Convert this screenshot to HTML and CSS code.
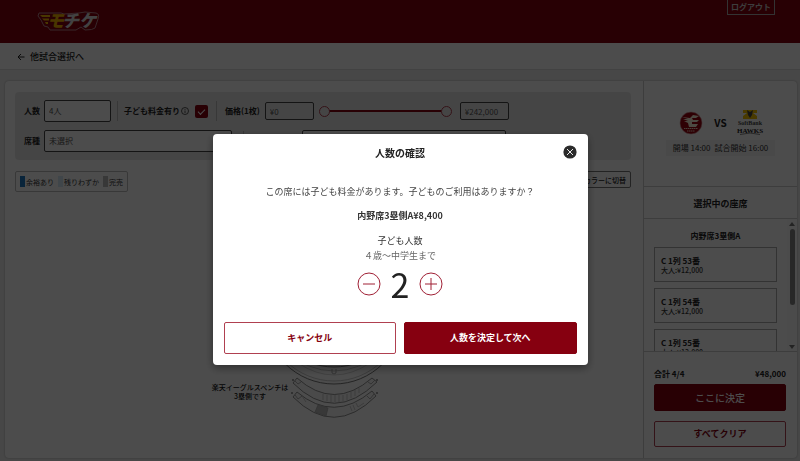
FILE: index.html
```html
<!DOCTYPE html>
<html lang="ja">
<head>
    <meta charset="UTF-8">
    <meta name="viewport" content="width=device-width, initial-scale=1.0">
    <title>座席選択</title>
    <link rel="stylesheet" href="styles.css">
</head>
<body>
    <header class="header">
        <svg class="logo" viewBox="0 0 64 20" role="img" aria-label="モチケ">
            <path d="M3 2H25L28 3L43 2L49 1L60 2Q64 3 62 8L59 17Q57 19 49 19L45 16L40 19H14L12 16L8 15L5 9L2 5Z" fill="#860010" stroke="#b9868c" stroke-width="1" stroke-linejoin="round"/>
            <path d="M4 4H14V6H6ZM6 7.500H13V9.500H8ZM9 11H12V13H10Z" fill="#f5b400"/>
            <text class="logo-text logo-gold" x="11" y="16">モ</text>
            <text class="logo-text" x="26" y="16">チケ</text>
        </svg>
        <button class="logout" type="button">ログアウト</button>
    </header>

    <nav class="subnav">
        <a class="back" href="#">
            <svg class="back-arrow" viewBox="0 0 8 8"><path d="M7.500 4H1M4 1L1 4L4 7"/></svg>
            他試合選択へ
        </a>
    </nav>

    <main class="content">
        <section class="seat-panel">
            <form class="filters">
                <div class="filter-row">
                    <label for="people">人数</label>
                    <select class="field people" id="people"><option>4人</option></select>
                    <span class="divider"></span>
                    <label for="child">子ども料金有り</label>
                    <svg class="info" viewBox="0 0 8 8"><circle cx="4" cy="4" r="3.500"/><path d="M4 3.500V6M4 2V2.800"/></svg>
                    <input class="check" type="checkbox" id="child" checked>
                    <span class="divider"></span>
                    <label class="price-label" for="price-min">価格(1枚)</label>
                    <input class="field price" type="text" id="price-min" value="¥0">
                    <div class="slider">
                        <input type="range" min="0" max="242000" value="0" aria-label="最低価格">
                        <input type="range" min="0" max="242000" value="242000" aria-label="最高価格">
                    </div>
                    <input class="field price" type="text" value="¥242,000" aria-label="上限">
                </div>
                <div class="filter-row">
                    <label for="seat-type">席種</label>
                    <select class="field seat-type" id="seat-type"><option>未選択</option></select>
                    <span class="divider"></span>
                    <label class="area-label" for="area">エリア</label>
                    <select class="field area" id="area"><option>未選択</option></select>
                </div>
            </form>

            <div class="map-tools">
                <ul class="legend">
                    <li><span class="swatch available"></span>余裕あり</li>
                    <li><span class="swatch few"></span>残りわずか</li>
                    <li><span class="swatch soldout"></span>完売</li>
                </ul>
                <button class="color-switch" type="button">座席カラーに切替</button>
            </div>

            <!-- Stadium map -->
            <svg class="map" viewBox="193 200 260 230">
                <g fill="none" stroke="#999" stroke-width="0.800">
                    <circle cx="334" cy="315" r="69" stroke="#555"/>
                    <circle cx="334" cy="313" r="68" stroke="#bbb"/>
                    <circle cx="334" cy="306" r="65" stroke="#bbb"/>
                    <circle cx="334" cy="300" r="67" stroke="#555"/>
                    <path d="M298 363Q334 387 370 363" stroke="#ccc"/>
                    <path d="M332 369V373Q334 375 336 373V369"/>
                    <path d="M297 378Q334 411 372 378L377 382Q334 424 293 383Z" fill="#f8f8f8" stroke="#777"/>
                    <path d="M295 381L298 384L301 382M375 380L371 384L368 382"/>
                    <path d="M323 394V400M327 395V401M331 395V402M335 395V402M339 395V402M343 395V401M347 394V400M351 392V398M355 390V396M359 388V393" stroke="#bbb"/>
                    <path d="M297 392Q334 423 372 391L376 396Q334 438 293 397Z" fill="#f8f8f8" stroke="#777"/>
                    <path d="M295 395L298 399L302 396M374 394L370 399L367 396" />
                    <path d="M302 396L306 402M350 406L352 411M353 405L355 410M356 403L358 407L364 403" stroke="#bbb"/>
                    <path d="M318 405L328 408L326 416L315 412Z" fill="#bbb" stroke="#aaa"/>
                </g>
                <g fill="#333">
                    <circle cx="293" cy="380" r="0.800"/><circle cx="377" cy="380" r="0.800"/>
                    <circle cx="292" cy="393" r="0.800"/><circle cx="377" cy="393" r="0.800"/>
                </g>
                <text class="map-text" x="250" y="390">楽天イーグルスベンチは</text>
                <text class="map-text" x="250" y="399">3塁側です</text>
            </svg>
        </section>

        <aside class="sidebar">
            <div class="match">
                <div class="teams">
                    <svg class="team" viewBox="0 0 24 26">
                        <circle cx="12" cy="13" r="11" fill="#9c0010" stroke="#d5a9a9" stroke-width="0.600"/>
                        <path d="M3 7L11 8L14 5L20 6L17 8H13L14 10H20L18 12H13V14H19L17 17H10L9 13L5 11L9 11L4 9L9 9Z" fill="#fff3dc"/>
                        <path d="M5 18.500H19M8 21H16" stroke="#ecd0bd" stroke-width="1.200" stroke-dasharray="1.500 0.500"/>
                    </svg>
                    <span class="vs">VS</span>
                    <svg class="team" viewBox="0 0 24 26">
                        <path d="M5 0H19V3H15L19 6V9H5V6L9 3H5Z" fill="#f5c400"/>
                        <path d="M9 0L12 2L15 0L14 5L12 8L10 5Z" fill="#444"/>
                        <text class="team-soft" x="12" y="15">SoftBank</text>
                        <text class="team-hawks" x="12" y="23">HAWKS</text>
                        <path d="M2 24.500Q12 21.500 22 24.500" fill="none" stroke="#666" stroke-width="0.800"/>
                    </svg>
                </div>
                <p class="times"><span>開場 14:00</span><span>試合開始 16:00</span></p>
            </div>
            <h2 class="selected-title">選択中の座席</h2>
            <div class="seat-list">
                <div class="seats">
                    <h3>内野席3塁側A</h3>
                    <div class="seat"><b>C 1列 53番</b><span>大人:¥12,000</span></div>
                    <div class="seat"><b>C 1列 54番</b><span>大人:¥12,000</span></div>
                    <div class="seat"><b>C 1列 55番</b><span>大人:¥12,000</span></div>
                </div>
                <div class="scrollbar">
                    <svg viewBox="0 0 6 4"><path d="M0 4L3 0L6 4Z"/></svg>
                    <span class="thumb"></span>
                    <svg viewBox="0 0 6 4"><path d="M0 0L3 4L6 0Z"/></svg>
                </div>
            </div>
            <div class="summary">
                <p class="total"><span>合計 4/4</span><span>¥48,000</span></p>
                <button class="btn btn-primary decide" type="button">ここに決定</button>
                <button class="btn btn-outline clear" type="button">すべてクリア</button>
            </div>
        </aside>
    </main>

    <div class="overlay">
        <div class="modal" role="dialog" aria-labelledby="modal-title">
            <h1 id="modal-title">人数の確認</h1>
            <button class="close" type="button" aria-label="閉じる">
                <svg viewBox="0 0 14 14"><circle cx="7" cy="7" r="6.600" fill="#2b2b2b"/><path d="M4 4L10 10M10 4L4 10" stroke="#fff" stroke-width="0.900"/></svg>
            </button>
            <p class="question">この席には子ども料金があります。子どものご利用はありますか？</p>
            <p class="seat-price">内野席3塁側A¥8,400</p>
            <p class="child-label">子ども人数</p>
            <p class="child-age">４歳〜中学生まで</p>
            <div class="counter">
                <button class="step" type="button" aria-label="減らす"><svg viewBox="0 0 24 24"><circle cx="12" cy="12" r="11"/><path d="M6 12H18"/></svg></button>
                <output class="count">2</output>
                <button class="step" type="button" aria-label="増やす"><svg viewBox="0 0 24 24"><circle cx="12" cy="12" r="11"/><path d="M6 12H18M12 6V18"/></svg></button>
            </div>
            <div class="modal-actions">
                <button class="btn btn-outline" type="button">キャンセル</button>
                <button class="btn btn-primary" type="button">人数を決定して次へ</button>
            </div>
        </div>
    </div>
</body>
</html>
```

FILE: styles.css
```css
* {
    box-sizing: border-box;
}
body {
    font-family: "Noto Sans CJK JP", sans-serif;
    font-size: 8px;
    line-height: 12px;
    color: #222;
    background-color: #eee;
    margin: 0;
    height: 100vh;
    display: flex;
    flex-direction: column;
    overflow: hidden;
}
h1, h2, h3, p, ul {
    margin: 0;
    padding: 0;
}
button, input, select {
    font-family: inherit;
    font-size: inherit;
    line-height: inherit;
    color: inherit;
    margin: 0;
}
svg {
    display: block;
}

/* Header */
.header {
    display: flex;
    justify-content: space-between;
    align-items: flex-start;
    height: 43px;
    flex-shrink: 0;
    padding: 0 25px 0 36px;
    background-color: #860010;
}
.logo {
    width: 64px;
    height: 20px;
    margin-top: 11px;
    overflow: visible;
}
.logo-text {
    font-size: 17px;
    font-weight: 900;
    font-style: italic;
    fill: #ddd;
}
.logo-gold {
    fill: #f5b400;
}
.logout {
    height: 15px;
    padding: 0 3px;
    border: 1px solid #aaa;
    border-top: 0;
    background-color: transparent;
    color: #ccc;
    font-weight: bold;
}
.subnav {
    flex-shrink: 0;
    height: 27px;
    padding: 8px 17px;
    background-color: #fff;
    border-bottom: 1px solid #ddd;
}
.back {
    display: flex;
    align-items: center;
    gap: 5px;
    color: #222;
    font-size: 9px;
    font-weight: 500;
    text-decoration: none;
}
.back-arrow {
    width: 8px;
    height: 8px;
    fill: none;
    stroke: #222;
}

/* Main card */
.content {
    flex: 1;
    min-height: 0;
    display: flex;
    margin: 11px 3px 3px 5px;
    background-color: #fff;
    border-radius: 4px;
    box-shadow: 0 0 2px rgba(0, 0, 0, 0.3);
}
.seat-panel {
    flex: 1;
    min-width: 0;
    padding: 11px 12px 0 10px;
    overflow: hidden;
}
.filters {
    display: flex;
    flex-direction: column;
    gap: 8px;
    height: 68px;
    padding: 8px 9px;
    border-radius: 4px;
    background-color: #e8e8e8;
}
.filter-row {
    display: flex;
    align-items: center;
    height: 22px;
    font-weight: bold;
    white-space: nowrap;
}
.field {
    appearance: none;
    height: 22px;
    padding: 0 4px;
    border: 1px solid #444;
    border-radius: 2px;
    background-color: #fff;
    color: #555;
}
.people {
    width: 67px;
    margin: 0 6px 0 4px;
}
.divider {
    width: 1px;
    height: 20px;
    margin-right: 6px;
    background-color: #bbb;
}
.info {
    width: 8px;
    height: 8px;
    margin: 0 6px 0 1px;
    fill: none;
    stroke: #333;
    stroke-width: 0.8;
}
.check {
    appearance: none;
    width: 13px;
    height: 13px;
    margin-right: 8px;
    border-radius: 2px;
    background-color: #860010;
}
.check:checked::before {
    content: "";
    display: block;
    width: 6px;
    height: 3px;
    margin: 4px 3px;
    border-left: 1px solid #fff;
    border-bottom: 1px solid #fff;
    transform: rotate(-45deg);
}
.price-label {
    margin: 0 5px 0 2px;
}
.price {
    width: 49px;
    height: 18px;
    background-color: transparent;
}
.slider {
    display: grid;
    align-items: center;
    width: 133px;
    margin: 0 8px 0 5px;
}
.slider input {
    grid-area: 1 / 1;
    appearance: none;
    width: 100%;
    height: 12px;
    background: none;
    pointer-events: none;
}
.slider::before {
    content: "";
    grid-area: 1 / 1;
    height: 2px;
    margin: 0 6px;
    background-color: #860010;
}
.slider input::-webkit-slider-thumb {
    appearance: none;
    width: 11px;
    height: 11px;
    border: 1px solid #b04050;
    border-radius: 50%;
    background-color: #e8e8e8;
    pointer-events: auto;
}
.seat-type {
    width: 188px;
    margin: 0 11px 0 4px;
}
.area-label {
    width: 52px;
}
.area {
    width: 204px;
}

.map-tools {
    display: flex;
    justify-content: space-between;
    align-items: flex-start;
    margin-top: 11px;
    font-size: 7px;
}
.legend {
    display: flex;
    align-items: center;
    gap: 4px;
    height: 21px;
    padding: 0 4px;
    border: 1px solid #bbb;
    border-radius: 2px;
    color: #333;
    list-style-type: none;
}
.legend li {
    display: flex;
    align-items: center;
    gap: 1px;
}
.swatch {
    width: 5px;
    height: 11px;
}
.available {
    background-color: #1f7ac4;
}
.few {
    background-color: #d8ebf8;
}
.soldout {
    background-color: #bbb;
}
.color-switch {
    height: 17px;
    padding: 0 4px;
    border: 1px solid #777;
    border-radius: 2px;
    background-color: #fff;
    font-weight: 500;
}
.map {
    width: 260px;
    height: 230px;
    margin: 8px auto 0;
}
.map-text {
    font-size: 7px;
    font-weight: 500;
    text-anchor: middle;
    fill: #111;
}

/* Sidebar */
.sidebar {
    width: 154px;
    flex-shrink: 0;
    display: flex;
    flex-direction: column;
    border-left: 1px solid #ccc;
}
.match {
    height: 106px;
    padding: 29px 0 0;
    border-bottom: 1px solid #ccc;
}
.teams {
    display: flex;
    justify-content: center;
    align-items: center;
    gap: 11px;
}
.team {
    width: 24px;
    height: 26px;
    overflow: visible;
}
.team-soft {
    font-family: "Liberation Serif", serif;
    font-size: 6px;
    font-weight: bold;
    text-anchor: middle;
    fill: #444;
}
.team-hawks {
    font-family: "Liberation Serif", serif;
    font-size: 7px;
    font-weight: bold;
    text-anchor: middle;
    fill: #222;
}
.vs {
    font-size: 10px;
    font-weight: bold;
}
.times {
    display: flex;
    justify-content: center;
    gap: 4px;
    margin: 4px 22px 0;
    padding: 2px 0;
    background-color: #f4f4f4;
    color: #333;
    white-space: nowrap;
}
.selected-title {
    height: 32px;
    border-bottom: 1px solid #ccc;
    font-size: 9px;
    line-height: 34px;
    text-align: center;
}
.seat-list {
    flex: 1;
    min-height: 0;
    display: flex;
    overflow: hidden;
}
.seats {
    flex: 1;
    padding: 10px 10px 0;
}
.seats h3 {
    font-size: 8px;
    line-height: 14px;
    margin-bottom: 4px;
    text-align: center;
}
.seat {
    display: flex;
    flex-direction: column;
    height: 35px;
    margin-bottom: 6px;
    padding: 7px 6px;
    border: 1px solid #aaa;
}
.seat b {
    line-height: 11px;
}
.seat span {
    color: #333;
    font-size: 7px;
    font-weight: 500;
    line-height: 9px;
}
.scrollbar {
    display: flex;
    flex-direction: column;
    justify-content: space-between;
    align-items: center;
    width: 10px;
    padding: 3px 0 2px;
    background-color: #fafafa;
}
.scrollbar svg {
    width: 6px;
    height: 4px;
    fill: #777;
}
.thumb {
    width: 5px;
    height: 76px;
    margin: 3px 0 auto;
    border-radius: 3px;
    background-color: #888;
}
.summary {
    display: flex;
    flex-direction: column;
    padding: 16px 11px 11px 10px;
    border-top: 1px solid #ccc;
}
.total {
    display: flex;
    justify-content: space-between;
    margin-bottom: 4px;
    font-weight: bold;
}
.btn {
    border: 1px solid #860010;
    border-radius: 2px;
    font-size: 9px;
    font-weight: bold;
}
.btn-primary {
    background-color: #860010;
    color: #fff;
}
.btn-outline {
    background-color: #fff;
    border-color: #b04050;
    color: #860010;
}
.decide {
    height: 27px;
    margin-bottom: 10px;
    font-size: 10px;
    font-weight: 500;
}
.clear {
    height: 26px;
}

/* Modal */
.overlay {
    position: fixed;
    inset: 0;
    display: flex;
    justify-content: center;
    align-items: flex-start;
    padding-top: 134px;
    background-color: rgba(0, 0, 0, 0.7);
}
.modal {
    position: relative;
    width: 375px;
    padding: 12px 11px 11px;
    border-radius: 4px;
    background-color: #fff;
    box-shadow: 0 3px 8px rgba(0, 0, 0, 0.4);
    font-size: 9px;
    line-height: 14px;
    text-align: center;
}
.modal h1 {
    font-size: 10px;
    line-height: 14px;
}
.close {
    position: absolute;
    top: 11px;
    right: 11px;
    width: 14px;
    height: 14px;
    padding: 0;
    border: 0;
    background: none;
}
.question {
    margin-top: 25px;
    color: #444;
}
.seat-price {
    margin-top: 10px;
    color: #333;
    font-weight: bold;
}
.child-label {
    margin-top: 11px;
    color: #333;
}
.child-age {
    margin-top: 1px;
    color: #666;
}
.counter {
    display: flex;
    justify-content: center;
    align-items: center;
    gap: 10px;
    height: 42px;
}
.step {
    width: 24px;
    height: 24px;
    padding: 0;
    border: 0;
    background: none;
}
.step svg {
    width: 24px;
    height: 24px;
    fill: none;
    stroke: #a02035;
    stroke-width: 1;
}
.count {
    font-size: 34px;
    line-height: 42px;
}
.modal-actions {
    display: flex;
    gap: 8px;
    margin-top: 17px;
}
.modal-actions .btn {
    flex: 1;
    height: 32px;
}
```
